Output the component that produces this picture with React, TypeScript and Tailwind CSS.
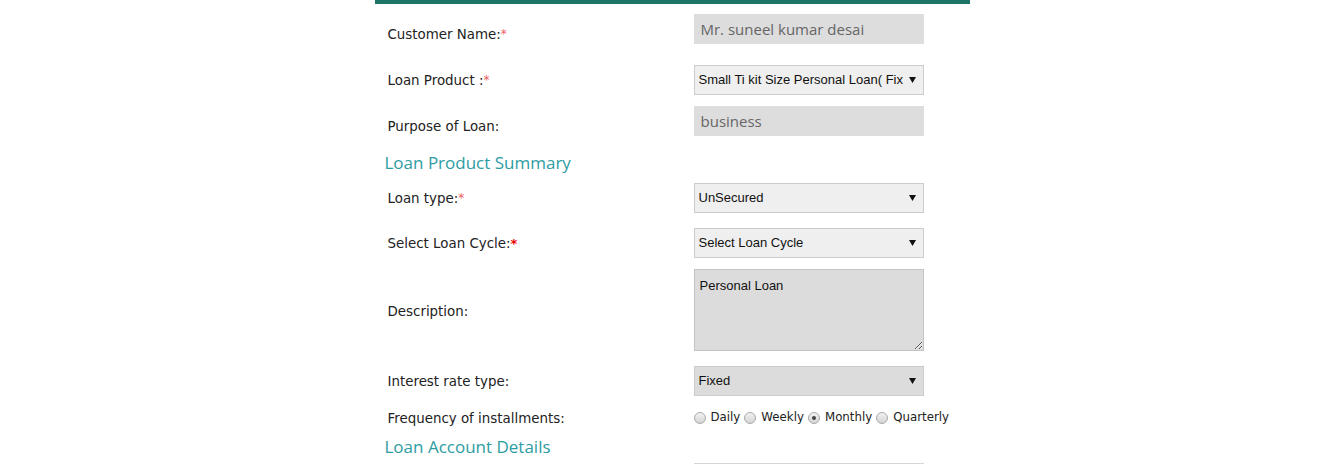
import React from "react";

const labelFont = { fontFamily: '"DejaVu Sans", Verdana, sans-serif' };
const fieldFont = { fontFamily: '"Liberation Sans", Arial, sans-serif' };
const openFont = { fontFamily: '"Open Sans", "Segoe UI", sans-serif' };

function Req({ strong }: { strong?: boolean }) {
  if (strong) {
    return <span className="text-[#e00] font-bold text-[13px]">*</span>;
  }
  return <span className="text-[#f06060] text-[12px] relative -top-[1px]">*</span>;
}

function Label({ children, shift }: { children: React.ReactNode; shift?: boolean }) {
  return (
    <div
      className={`w-[319px] shrink-0 pl-[13px] text-[13.4px] text-[#222] relative top-[1px] ${shift ? "mt-[10px]" : ""}`}
      style={labelFont}
    >
      {children}
    </div>
  );
}

function TextBox({ value }: { value: string }) {
  return (
    <input
      readOnly
      value={value}
      className="w-[230px] h-[30px] bg-[#dddddd] px-[7px] pb-[1px] text-[15px] text-[#666] outline-none"
      style={openFont}
    />
  );
}

function Arrow() {
  return (
    <svg
      width="7"
      height="6"
      viewBox="0 0 7 6"
      className="absolute right-[8px] top-1/2 -translate-y-1/2 pointer-events-none"
    >
      <path d="M0 0 L7 0 L3.5 6 Z" fill="#111" />
    </svg>
  );
}

function Select({ value, dark }: { value: string; dark?: boolean }) {
  return (
    <div className="relative w-[230px] h-[30px]">
      <select
        defaultValue={value}
        className={`appearance-none w-full h-full border border-[#cccccc] pl-[4px] pr-[18px] text-[13px] text-[#111] outline-none ${
          dark ? "bg-[#dcdcdc]" : "bg-[#efefef]"
        }`}
        style={fieldFont}
      >
        <option>{value}</option>
      </select>
      <Arrow />
    </div>
  );
}

function Radio({ label, checked }: { label: string; checked?: boolean }) {
  return (
    <label className="flex items-center gap-[5px] text-[11.8px] text-[#222]" style={labelFont}>
      <span className="w-[12px] h-[12px] rounded-full border border-[#a9a9a9] bg-gradient-to-b from-[#f2f2f2] to-[#d4d4d4] flex items-center justify-center">
        {checked && <span className="w-[4px] h-[4px] rounded-full bg-[#444]" />}
      </span>
      {label}
    </label>
  );
}

function Heading({ children, className }: { children: React.ReactNode; className: string }) {
  return (
    <div
      className={`h-[23px] leading-[23px] pl-[10px] text-[17px] text-[#2e9ca3] ${className}`}
      style={openFont}
    >
      {children}
    </div>
  );
}

export default function App() {
  return (
    <div className="w-full h-[464px] bg-white overflow-hidden">
      <div className="w-[595px] mx-auto flex flex-col">
        <div className="h-[4px] bg-[#1f7468]" />

        <div className="flex items-center mt-[10px]">
          <Label shift>
            Customer Name:<Req />
          </Label>
          <TextBox value="Mr. suneel kumar desai" />
        </div>

        <div className="flex items-center mt-[21px]">
          <Label>
            Loan Product :<Req />
          </Label>
          <Select value="Small Ti kit Size Personal Loan( Fix" />
        </div>

        <div className="flex items-center mt-[11px]">
          <Label shift>Purpose of Loan:</Label>
          <TextBox value="business" />
        </div>

        <Heading className="mt-[15px]">Loan Product Summary</Heading>

        <div className="flex items-center mt-[9px]">
          <Label>
            Loan type:<Req />
          </Label>
          <Select value="UnSecured" />
        </div>

        <div className="flex items-center mt-[15px]">
          <Label>
            Select Loan Cycle:<Req strong />
          </Label>
          <Select value="Select Loan Cycle" />
        </div>

        <div className="flex items-center mt-[11px]">
          <Label>
            <span className="relative top-[1px]">Description:</span>
          </Label>
          <textarea
            readOnly
            defaultValue="Personal Loan"
            className="w-[230px] h-[82px] bg-[#dcdcdc] border border-[#c4c4c4] px-[5px] py-[6px] text-[13px] text-[#111] outline-none"
            style={fieldFont}
          />
        </div>

        <div className="flex items-center mt-[15px]">
          <Label>Interest rate type:</Label>
          <Select value="Fixed" dark />
        </div>

        <div className="flex items-center mt-[12px] h-[20px]">
          <Label>Frequency of installments:</Label>
          <div className="flex items-center gap-[4px]">
            <Radio label="Daily" />
            <Radio label="Weekly" />
            <Radio label="Monthly" checked />
            <Radio label="Quarterly" />
          </div>
        </div>

        <Heading className="mt-[7px]">Loan Account Details</Heading>

        <div className="flex items-center mt-[5px]">
          <div className="w-[319px] shrink-0" />
          <div className="w-[230px] h-[30px] border-t border-[#d6d6d6] bg-white" />
        </div>
      </div>
    </div>
  );
}
